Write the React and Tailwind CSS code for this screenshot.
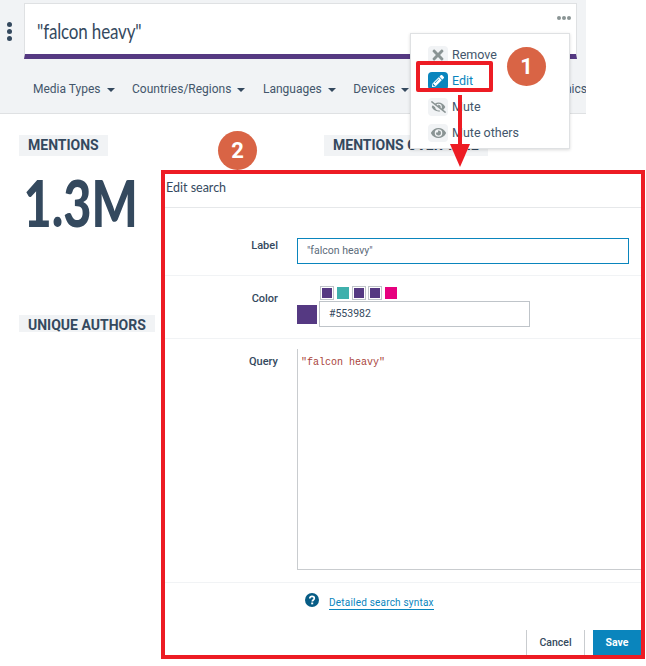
import React from 'react';
import { FaTimes, FaPencilAlt, FaEyeSlash, FaEye } from 'react-icons/fa';

const sans = "font-['Roboto',sans-serif]";

function Caret() {
  return <span className="ml-[6px] inline-block w-0 h-0 border-x-[4px] border-x-transparent border-t-[4px] border-t-[#34495e] align-middle" />;
}

function Filter({ label, className = '' }) {
  return (
    <span className={`whitespace-nowrap text-[12px] text-[#43566b] ${className}`}>
      {label}
      <Caret />
    </span>
  );
}

function SectionTag({ children, className = '' }) {
  return (
    <div className={`h-[21px] bg-[#f1f3f5] pl-[9px] text-[14px] leading-[21px] font-bold text-[#34495e] whitespace-nowrap overflow-hidden ${className}`}>
      {children}
    </div>
  );
}

function MenuRow({ icon: Icon, label, active = false, size = 'h-[16px] w-[16px]' }) {
  return (
    <div className="flex h-[26px] items-center gap-[4px] pl-[17px]">
      <span className={`flex h-[18px] w-[20px] items-center justify-center rounded-[4px] ${active ? 'bg-[#0a85bd]' : 'bg-[#f1f3f5]'}`}>
        <Icon className={`${size} ${active ? 'text-white' : 'text-[#8a9494]'}`} />
      </span>
      <span className={`text-[12.5px] ${active ? 'text-[#0a85bd]' : 'text-[#43566b]'}`}>{label}</span>
    </div>
  );
}

function Swatch({ color, ring = false }) {
  return (
    <span className={`flex h-[14px] w-[14px] items-center justify-center border ${ring ? 'border-[#bfc4c9]' : 'border-transparent'}`}>
      <span className={`shrink-0 ${ring ? 'h-[10px] w-[10px]' : 'h-[12px] w-[12px]'}`} style={{ background: color }} />
    </span>
  );
}

function FormLabel({ children, className = '' }) {
  return <div className={`w-[113px] shrink-0 text-right text-[11px] leading-[14px] font-medium text-[#34495e] ${className}`}>{children}</div>;
}

function Bubble({ n, className }) {
  return (
    <div className={`absolute flex h-[39px] w-[39px] items-center justify-center rounded-full bg-[#d96445] text-[22px] font-bold text-white ${className}`}>
      {n}
    </div>
  );
}

export default function App() {
  return (
    <div className={`relative h-[666px] w-[646px] overflow-hidden bg-white ${sans}`}>
      {/* header band */}
      <div className="h-[114px] w-[586px] overflow-hidden border-b border-[#dfe1e3] bg-[#f1f3f5]">
        <div className="flex h-[60px] items-start pt-[3px]">
          <div className="flex h-[56px] w-[24px] flex-col items-center justify-center gap-[2px] pr-[6px]">
            <span className="h-[5px] w-[5px] rounded-full bg-[#34495e]" />
            <span className="h-[5px] w-[5px] rounded-full bg-[#34495e]" />
            <span className="h-[5px] w-[5px] rounded-full bg-[#34495e]" />
          </div>
          <div className="h-[56px] w-[553px] border-x border-t border-[#dfe1e3] border-b-[5px] border-b-[#553982] bg-white">
            <div className="flex h-[50px] justify-between pl-[12px] pr-[5px]">
              <span className="origin-left scale-x-[0.81] whitespace-nowrap pt-[13px] font-['Lato',sans-serif] text-[21px] leading-[28px] tracking-[-0.2px] text-[#34495e]">"falcon heavy"</span>
              <span className="flex gap-[1px] pt-[12px]">
                <i className="h-[4px] w-[4px] rounded-full bg-[#8a9494]" />
                <i className="h-[4px] w-[4px] rounded-full bg-[#8a9494]" />
                <i className="h-[4px] w-[4px] rounded-full bg-[#8a9494]" />
              </span>
            </div>
          </div>
        </div>
        <div className="flex items-center gap-[17.5px] pl-[33px] pt-[20px]">
          <Filter label="Media Types" />
          <Filter label="Countries/Regions" />
          <Filter label="Languages" />
          <Filter label="Devices" />
          <Filter label="Demographics" className="ml-[83px]" />
        </div>
      </div>

      {/* page content behind the dialog */}
      <div className="flex pl-[19px] pt-[21px]">
        <div className="w-[305px]">
          <SectionTag className="w-[89px]">MENTIONS</SectionTag>
          <div className="origin-left scale-x-[0.76] pl-[6px] pt-[11px] font-['Lato',sans-serif] text-[64px] leading-[72px] font-black text-[#34495e]">1.3M</div>
          <SectionTag className="mt-[76px] w-[136px] !h-[17px]">UNIQUE AUTHORS</SectionTag>
        </div>
        <SectionTag className="w-[164px]">MENTIONS OVER TIME</SectionTag>
      </div>

      {/* dropdown menu */}
      <div className="absolute left-[410px] top-[33px] h-[116px] w-[160px] border border-[#dfe1e3] bg-white pt-[8px] shadow-[0_1px_3px_rgba(0,0,0,0.15)]">
        <MenuRow icon={FaTimes} label="Remove" />
        <MenuRow icon={FaPencilAlt} label="Edit" active size="h-[12px] w-[12px]" />
        <MenuRow icon={FaEyeSlash} label="Mute" size="h-[14px] w-[15px]" />
        <MenuRow icon={FaEye} label="Mute others" size="h-[14px] w-[15px]" />
      </div>

      {/* edit dialog */}
      <div className="absolute left-[161px] top-[170px] flex h-[489px] w-[484px] flex-col overflow-hidden border-[4px] border-[#ed1c24] bg-white">
        <div className="flex h-[34px] shrink-0 items-center border-b border-[#e6e8ea] pb-[4px] pl-[1px] font-['Lato',sans-serif] text-[12.5px] text-[#34495e]">Edit search</div>
        <div className="flex h-[68px] shrink-0 items-start border-b border-[#f1f3f5] pt-[30px]">
          <FormLabel className="mt-[1px]">Label</FormLabel>
          <div className="ml-[19px] flex h-[26px] w-[332px] items-center border border-[#0a85bd] pl-[9px] text-[10.5px] text-[#5c6b7a]">"falcon heavy"</div>
        </div>
        <div className="flex h-[63px] shrink-0 border-b border-[#f1f3f5] pt-[10px]">
          <FormLabel className="mt-[6px]">Color</FormLabel>
          <div className="ml-[19px] flex flex-col">
            <div className="ml-[23px] flex gap-[2px]">
              <Swatch color="#553982" ring />
              <Swatch color="#3fb0ac" />
              <Swatch color="#553982" ring />
              <Swatch color="#553982" ring />
              <Swatch color="#e6007e" />
            </div>
            <div className="mt-[1px] flex items-center gap-[2px]">
              <span className="h-[19px] w-[20px] bg-[#553982]" />
              <div className="flex h-[26px] w-[211px] items-center border border-[#bfc4c9] pl-[9px] text-[10.5px] text-[#34495e]">#553982</div>
            </div>
          </div>
        </div>
        <div className="flex h-[244px] shrink-0 border-b border-[#f1f3f5] pt-[10px]">
          <FormLabel className="mt-[6px]">Query</FormLabel>
          <div className="ml-[19px] h-[221px] flex-1 border-l border-b border-[#c9cccf] pl-[3px] pt-[5px] font-['Liberation_Mono',monospace] text-[10px] leading-[18px] text-[#a9443a]">"falcon heavy"</div>
        </div>
        <div className="flex shrink-0 items-start pl-[140px] pt-[10px]">
          <svg viewBox="0 0 14 14" className="h-[14px] w-[14px]">
            <circle cx="7" cy="7" r="7" fill="#075c85" />
            <path d="M4.8 5.4C4.8 4.1 5.8 3.3 7 3.3c1.3 0 2.3.8 2.3 2 0 1.7-2 1.6-2 3.2" fill="none" stroke="#fff" strokeWidth="1.7" />
            <rect x="6.2" y="9.5" width="2" height="1.8" fill="#fff" />
          </svg>
          <span className="ml-[10px] mt-[3px] border-b border-[#0a85bd] text-[10px] leading-[13px] tracking-[0.2px] text-[#0a85bd]">Detailed search syntax</span>
        </div>
        <div className="flex flex-1 items-end justify-end">
          <div className="flex h-[25px] w-[59px] items-center justify-center border-x border-[#c9cccf] text-[10.5px] font-medium text-[#34495e]">Cancel</div>
          <div className="ml-[8px] flex h-[25px] w-[48px] items-center justify-center bg-[#0a85bd] text-[10.5px] font-bold text-white">Save</div>
        </div>
      </div>

      {/* annotations */}
      <div className="absolute left-[416px] top-[61px] h-[31px] w-[77px] rounded-[2px] border-[4px] border-[#ed1c24]" />
      <Bubble n="1" className="left-[507px] top-[47px]" />
      <Bubble n="2" className="left-[218px] top-[131px]" />
      <svg className="absolute left-[450px] top-[95px]" width="20" height="72" viewBox="0 0 20 72">
        <rect x="8" width="4" height="50" fill="#ed1c24" />
        <path d="M0 49 H20 L10 72 Z" fill="#ed1c24" />
      </svg>
    </div>
  );
}
